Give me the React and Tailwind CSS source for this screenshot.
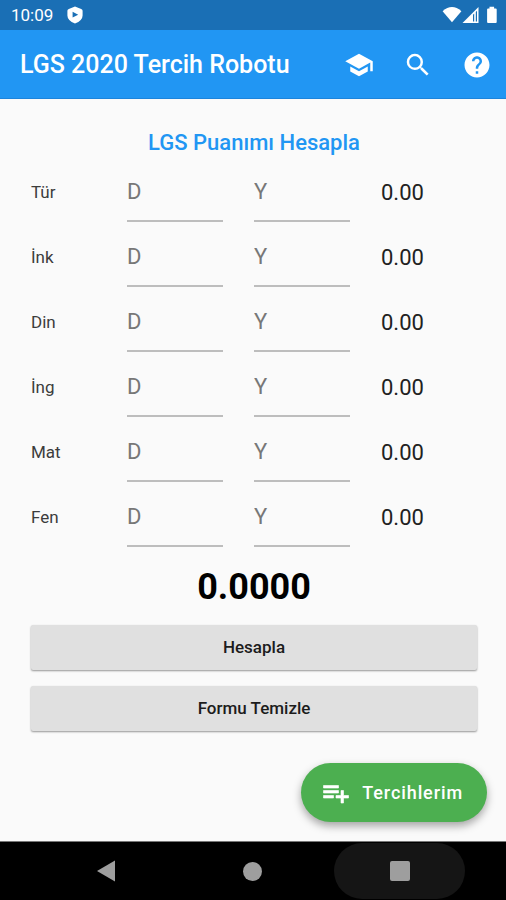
import React, { useState } from 'react';
import { MdSchool, MdSearch, MdHelp } from 'react-icons/md';

const LESSONS = [
    { id: 'tur', label: 'Tür', weight: 4 },
    { id: 'ink', label: 'İnk', weight: 1 },
    { id: 'din', label: 'Din', weight: 1 },
    { id: 'ing', label: 'İng', weight: 1 },
    { id: 'mat', label: 'Mat', weight: 4 },
    { id: 'fen', label: 'Fen', weight: 4 },
];

const StatusBar = () => (
    <div className="flex h-[30px] items-center justify-between bg-[#1a6fb5] pr-2 pl-[11px] text-white">
        <div className="flex items-center gap-[14px]">
            <span className="text-[17px] leading-5">10:09</span>
            <svg viewBox="0 0 16 18" className="h-[18px] w-4" fill="currentColor">
                <path
                    fillRule="evenodd"
                    d="M8 0.5 14.2 3Q15.6 3.4 15.6 4.8V9.5Q15.6 14.5 8 17.5Q0.4 14.5 0.4 9.5V4.8Q0.4 3.4 1.8 3ZM5.6 5.8V11.6L11.2 8.7Z"
                />
            </svg>
        </div>
        <svg viewBox="0 0 56 18" className="h-[18px] w-14" fill="currentColor">
            <path d="M0.6 5.2Q10 -3 19.4 5.2L10 16.2Z" />
            <path fillRule="evenodd" d="M20.5 17 36.5 1V17ZM31 8.800V15.400H32.200V7.600ZM33.8 6V15.4H35V4.8Z" />
            <path d="M47.5 0.8h4.6v1.8h1.6q1 0 1 1V16q0 1-1 1h-7.6q-1 0-1-1V3.600q0-1 1-1h1.400z" />
        </svg>
    </div>
);

const AppBar = () => (
    <header className="flex h-[69px] items-center justify-between border-b border-[#1c84dc] bg-[#2196f3] pt-px pr-[14px] pl-5 text-white">
        <h1 className="text-[25px] leading-8 font-medium">LGS 2020 Tercih Robotu</h1>
        <div className="flex items-center gap-[29px]">
            <button aria-label="Okullar"><MdSchool className="size-[30px]" /></button>
            <button aria-label="Ara"><MdSearch className="size-[30px]" /></button>
            <button aria-label="Yardım"><MdHelp className="size-[30px]" /></button>
        </div>
    </header>
);

const NumberField = ({ label, placeholder, value, onChange }) => (
    <input
        type="text"
        inputMode="numeric"
        aria-label={label}
        placeholder={placeholder}
        value={value}
        onChange={e => onChange(e.target.value)}
        className="h-full w-full min-w-0 border-b-2 border-[#bdbdbd] bg-transparent pt-1.5 text-[22px] text-[#212121] outline-none placeholder:text-[#777777] focus:border-[#2196f3]"
    />
);

const NavBar = () => (
    <nav className="grid h-[59px] grid-cols-3 items-center border-t border-[#777777] bg-black px-[33px]">
        <button aria-label="Geri" className="flex h-full items-center justify-center text-[#9e9e9e]">
            <svg viewBox="0 0 18 22" className="h-[22px] w-[18px]" fill="currentColor">
                <path d="M0 11 18 0.400V21.600Z" />
            </svg>
        </button>
        <button aria-label="Ana ekran" className="flex h-full items-center justify-center">
            <span className="size-[19px] rounded-full bg-[#9e9e9e]" />
        </button>
        <button aria-label="Son uygulamalar" className="mx-auto flex h-14 w-[131px] items-center justify-center rounded-full bg-[#151515]">
            <span className="size-5 rounded-xs bg-[#9e9e9e]" />
        </button>
    </nav>
);

const App = () => {
    const [answers, setAnswers] = useState({});
    const [score, setScore] = useState(0);

    const setAnswer = (key, value) => {
        setAnswers(prev => ({ ...prev, [key]: value }));
    };

    // Three wrong answers cancel one correct answer
    const net = id => Number(answers[`${id}-d`] || 0) - Number(answers[`${id}-y`] || 0) / 3;

    const handleCalculate = () => {
        const total = LESSONS.reduce((acc, l) => acc + net(l.id) * l.weight, 0);
        setScore(total);
    };

    const handleClear = () => {
        setAnswers({});
        setScore(0);
    };

    const buttonClass =
        'h-[45px] w-full rounded-xs bg-[#e0e0e0] text-[17px] font-medium text-[#1c1c1c] shadow-[0_1px_2px_rgba(0,0,0,0.4)]';

    return (
        <div className="flex min-h-screen flex-col bg-[#fafafa] font-['Roboto',sans-serif]">
            <StatusBar />
            <AppBar />

            <main className="flex flex-1 flex-col pt-[30px] pr-[29px] pl-[31px]">
                <h2 className="text-center text-[22px] leading-7 font-medium text-[#2196f3]">LGS Puanımı Hesapla</h2>

                {LESSONS.map(lesson => (
                    <div key={lesson.id} className="grid h-[65px] grid-cols-[65px_1fr_1fr_1fr] items-center gap-x-[31px]">
                        <span className="pt-1.5 text-[17px] text-[#3c3c3c]">{lesson.label}</span>
                        <NumberField
                            label={`${lesson.label} doğru`}
                            placeholder="D"
                            value={answers[`${lesson.id}-d`] || ''}
                            onChange={value => setAnswer(`${lesson.id}-d`, value)}
                        />
                        <NumberField
                            label={`${lesson.label} yanlış`}
                            placeholder="Y"
                            value={answers[`${lesson.id}-y`] || ''}
                            onChange={value => setAnswer(`${lesson.id}-y`, value)}
                        />
                        <span className="pt-1.5 text-[22px] text-[#212121]">{net(lesson.id).toFixed(2)}</span>
                    </div>
                ))}

                <p className="mt-5 text-center text-[36px] leading-10 font-bold text-black">{score.toFixed(4)}</p>

                <div className="mt-[18px] flex flex-col gap-4">
                    <button onClick={handleCalculate} className={buttonClass}>Hesapla</button>
                    <button onClick={handleClear} className={buttonClass}>Formu Temizle</button>
                </div>
            </main>

            <div className="flex justify-end px-[19px] pt-8 pb-[19px]">
                <button className="flex h-[59px] items-center gap-[11px] rounded-full bg-[#4caf50] pr-6 pl-5 text-white shadow-[0_4px_8px_rgba(0,0,0,0.35)]">
                    <svg viewBox="0 0 24 24" className="size-[30px]" fill="currentColor" stroke="currentColor" strokeWidth="0.5">
                        <path d="M14 10H2v2h12v-2zm0-4H2v2h12V6zm4 8v-4h-2v4h-4v2h4v4h2v-4h4v-2h-4zM2 16h8v-2H2v2z" />
                    </svg>
                    <span className="text-[18px] font-medium tracking-wider">Tercihlerim</span>
                </button>
            </div>

            <NavBar />
        </div>
    );
};

export default App;
